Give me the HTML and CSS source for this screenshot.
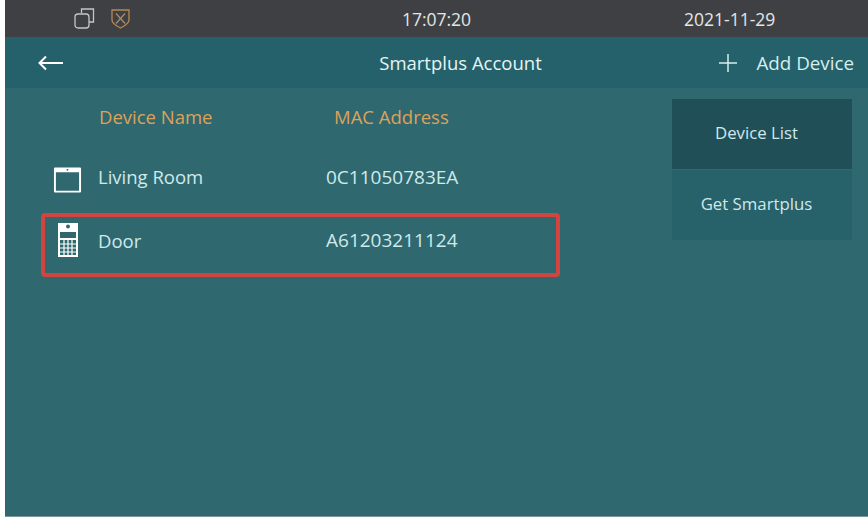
FILE: index.html
```html
<!DOCTYPE html>
<html lang="en">
<head>
<meta charset="utf-8">
<title>Smartplus Account</title>
<link rel="stylesheet" href="styles.css">
</head>
<body>
<div class="screen">
  <div class="status">
    <div class="status-icons">
      <svg width="21" height="21" viewBox="0 0 21 21" fill="none" stroke="#c4c6c6" stroke-width="1.300"><path d="M7.500 5V1h12v13H15"/><rect x="1" y="6" width="14" height="14" rx="3"/></svg>
      <svg width="19" height="22" viewBox="0 0 19 22" fill="none" stroke="#b98850" stroke-width="1.300"><path d="M1 2h17v10c0 3.500-4.500 6-8.500 8C5.500 18 1 15.500 1 12z"/><path d="M5 5.500l9 10M14 5.500l-9 10" stroke="#a88a70"/></svg>
    </div>
    <div class="clock">17:07:20</div>
    <div class="date">2021-11-29</div>
  </div>
  <div class="header">
    <svg class="back" width="26" height="16" viewBox="0 0 26 16" fill="none" stroke="#fff" stroke-width="2"><path d="M1.500 8H25M8 1.500L1.500 8 8 14.500"/></svg>
    <div class="title">Smartplus Account</div>
    <div class="add">
      <svg width="20" height="20" viewBox="0 0 20 20" stroke="#d6eeee" stroke-width="1.500"><path d="M10 1v18M1 10h18"/></svg>
      <span>Add Device</span>
    </div>
  </div>
  <div class="main">
    <div class="list">
      <div class="row head">
        <span class="c-name">Device Name</span>
        <span class="c-mac">MAC Address</span>
      </div>
      <div class="row item first">
        <svg class="dev dev-panel" width="29" height="28" viewBox="0 0 30 28"><path fill="#fff" fill-rule="evenodd" d="M2 1h26a1 1 0 0 1 1 1v24a1 1 0 0 1-1 1H2a1 1 0 0 1-1-1V2a1 1 0 0 1 1-1zM3 6v19h24V6z"/><circle cx="15" cy="3.500" r="1" fill="#30686f"/></svg>
        <span class="c-name">Living Room</span>
        <span class="c-mac">0C11050783EA</span>
      </div>
      <div class="row item selected">
        <svg class="dev dev-door" width="22" height="36" viewBox="0 0 22 36"><path fill="#fff" fill-rule="evenodd" d="M1 1h20v34H1zM3 10v6h16v-6zM3 18v15h16V18z"/><circle cx="11" cy="4.500" r="2" fill="#30686f"/><path stroke="#fff" stroke-width="1.200" d="M7 18v15M11 18v15M15 18v15M3 22h16M3 26h16M3 30h16"/></svg>
        <span class="c-name">Door</span>
        <span class="c-mac">A61203211124</span>
      </div>
    </div>
    <div class="side">
      <div class="tab active">Device List</div>
      <div class="tab">Get Smartplus</div>
    </div>
  </div>
</div>
</body>
</html>
```
FILE: styles.css
```css
html, body { margin: 0; padding: 0; background: #fff; }
body { width: 868px; height: 520px; overflow: hidden; font-family: "Open Sans", "Noto Sans", sans-serif; color: #cfe9ea; }
.screen { margin-left: 5px; height: 516px; display: flex; flex-direction: column; background: #30686f; border-bottom: 1px solid #7a9599; }
.status { height: 37px; flex: none; background: #3f4043; color: #e3e6e6; font-size: 17.500px; display: grid; grid-template-columns: 310px 243px 1fr; align-items: center; }
.status-icons { display: flex; align-items: center; gap: 16px; padding-left: 69px; }
.clock { text-align: center; }
.date { padding-left: 126px; }
.header { height: 51px; flex: none; background: #24616a; display: flex; align-items: center; position: relative; padding: 0 14px 0 33px; justify-content: space-between; }
.title { font-size: 18.500px; color: #e6f4f4; position: absolute; left: 0; right: 0; text-align: center; padding-left: 48px; }
.add { display: flex; align-items: center; gap: 18px; font-size: 18.800px; color: #d6eeee; }
.main { flex: 1; display: flex; justify-content: space-between; padding: 11px 16px 0 36px; }
.list { width: 519px; display: flex; flex-direction: column; }
.row { display: grid; grid-template-columns: 57px 228px 1fr; align-items: center; font-size: 19px; }
.head { height: 34px; color: #dda25a; }
.head .c-name { grid-column: 2; padding-left: 1px; font-size: 18.500px; }
.head .c-mac { grid-column: 3; padding-left: 8px; font-size: 18.500px; }
.item { color: #cdeaec; }
.item .c-name { font-size: 18.500px; }
.first { height: 53px; margin-top: 17px; }
.selected { height: 64px; box-sizing: border-box; border: 4px solid #d2443f; border-radius: 4px; margin-top: 10px; grid-template-columns: 53px 228px 1fr; padding-bottom: 10px; }
.dev { justify-self: start; }
.dev-panel { margin: 6px 0 0 12px; }
.dev-door { margin: 0 0 0 12px; }
.side { width: 180px; display: flex; flex-direction: column; }
.tab { height: 70px; box-sizing: border-box; background: #27616a; display: flex; align-items: center; justify-content: center; font-size: 16.800px; color: #cfe9ea; padding: 0 11px 3px 0; }
.tab + .tab { height: 71px; border-top: 1px solid #2c6b73; }
.active { background: #214f58; }
```
